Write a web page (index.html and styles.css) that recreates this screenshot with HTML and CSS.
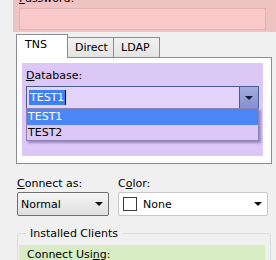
FILE: index.html
```html
<!DOCTYPE html>
<html>
<head>
<meta charset="utf-8">
<link rel="stylesheet" href="styles.css">
</head>
<body>
<div class="page">
  <div class="pw-section">
    <div class="lbl pw-lbl"><u>P</u>assword:</div>
    <div class="pw-input"></div>
  </div>

  <div class="tabs">
    <div class="tab active">TNS</div>
    <div class="tab">Direct</div>
    <div class="tab">LDAP</div>
  </div>
  <div class="panel">
    <div class="db-section">
      <div class="lbl db-lbl"><u>D</u>atabase:</div>
      <div class="combo">
        <div class="combo-text"><span class="sel">TEST1</span><span class="caret"></span></div>
        <div class="combo-btn"><span class="arrow"></span></div>
        <div class="dropdown">
          <div class="opt hi">TEST1</div>
          <div class="opt">TEST2</div>
        </div>
      </div>
    </div>
  </div>

  <div class="row">
    <div class="field f-conn">
      <div class="lbl"><u>C</u>onnect as:</div>
      <div class="select">
        <span>Normal</span><span class="arrow dark"></span>
      </div>
    </div>
    <div class="field f-color">
      <div class="lbl">C<u>o</u>lor:</div>
      <div class="select flat">
        <span class="swatch"></span><span class="grow">None</span><span class="arrow dark"></span>
      </div>
    </div>
  </div>

  <div class="group">
    <div class="group-title">Installed Clients</div>
    <div class="group-body">
      <div class="lbl green">Connect Usi<u>n</u>g:</div>
    </div>
  </div>
</div>
</body>
</html>
```

FILE: styles.css
```css
html, body {
  margin: 0;
  padding: 0;
}
body {
  background: #f0f0f0;
  font-family: "DejaVu Sans", Verdana, sans-serif;
  font-size: 11px;
  color: #000;
  width: 276px;
  height: 260px;
  overflow: hidden;
}
.page {
  display: flex;
  flex-direction: column;
}
.lbl {
  line-height: 13px;
  white-space: nowrap;
}
u {
  text-decoration: underline;
  text-underline-offset: 1px;
}
.pw-section {
  margin-left: 13px;
  margin-top: -8px;
  height: 40px;
  background: #f0c3c3;
  padding-left: 6px;
  padding-right: 10px;
  box-sizing: border-box;
}
.pw-lbl {
  height: 15px;
  padding-left: 0;
  line-height: 13px;
}
.pw-input {
  margin-top: 1px;
  height: 22px;
  background: #f9c9c9;
  border: 1px solid #dfb4b4;
  box-sizing: border-box;
}
.tabs {
  display: flex;
  margin-left: 16px;
  margin-top: 2px;
  height: 23px;
  align-items: flex-end;
  position: relative;
  z-index: 1;
}
.tab {
  height: 20px;
  box-sizing: border-box;
  border: 1px solid #898c95;
  border-bottom: none;
  background: linear-gradient(#f2f2f2, #e3e3e3);
  line-height: 19px;
  padding: 0 7px;
  margin-left: -1px;
}
.tab:first-child {
  margin-left: 0;
}
.tab.active {
  height: 24px;
  margin-bottom: -1px;
  background: #fff;
  width: 52px;
  padding: 0 0 0 8px;
  line-height: 20px;
  z-index: 2;
}
.tab:nth-child(2) { width: 47px; }
.tab:nth-child(3) { width: 47px; }
.panel {
  margin-left: 16px;
  width: 256px;
  height: 107px;
  box-sizing: border-box;
  border: 1px solid #898c95;
  background: #fff;
  padding: 5px 0 0 5px;
}
.db-section {
  width: 241px;
  height: 93px;
  background: #dcc8f7;
  padding: 6px 0 0 4px;
  box-sizing: border-box;
}
.db-lbl {
  height: 17px;
}
.combo {
  position: relative;
  width: 233px;
  height: 23px;
  box-sizing: border-box;
  border: 1px solid #4a5d8e;
  background: #e3d3f8;
  display: flex;
}
.combo-text {
  flex: 1;
  padding: 3px 0 0 2px;
  line-height: 14px;
  display: flex;
  align-items: flex-start;
}
.sel {
  background: #3d7ff5;
  color: #fff;
  line-height: 15px;
  padding: 0 1px;
}
.caret {
  display: inline-block;
  width: 1px;
  height: 15px;
  background: #000;
}
.combo-btn {
  width: 19px;
  height: 21px;
  box-sizing: border-box;
  border-left: 1px solid #4a5d8e;
  background: linear-gradient(#a4a9df, #8690d2);
  display: flex;
  align-items: center;
  justify-content: center;
}
.arrow {
  width: 0;
  height: 0;
  border-left: 4px solid transparent;
  border-right: 4px solid transparent;
  border-top: 4px solid #1a1a3a;
}
.dropdown {
  position: absolute;
  left: -1px;
  top: 21px;
  width: 233px;
  height: 33px;
  box-sizing: border-box;
  border: 1px solid #8a7fb0;
  background: #dcc8f7;
  box-shadow: 2px 2px 2px rgba(80, 60, 120, 0.45);
}
.opt {
  height: 16px;
  line-height: 16px;
  padding-left: 1px;
}
.opt.hi {
  background: #4b86f6;
  color: #fff;
}
.row {
  display: flex;
  margin-top: 13px;
  margin-left: 17px;
  gap: 9px;
}
.field .lbl {
  height: 15px;
}
.select {
  margin-top: 0;
  height: 24px;
  box-sizing: border-box;
  border: 1px solid #707070;
  border-radius: 2px;
  background: linear-gradient(#f6f6f6, #dedede);
  display: flex;
  align-items: center;
  padding: 0 5px 0 3px;
  justify-content: space-between;
}
.f-conn .select {
  width: 92px;
}
.f-color .select {
  width: 150px;
}
.select.flat {
  background: #fff;
  border: 1px solid #c8c8c8;
  justify-content: flex-start;
  padding-left: 4px;
}
.swatch {
  width: 14px;
  height: 14px;
  box-sizing: border-box;
  border: 1px solid #3a3a3a;
  background: #fff;
  margin-right: 6px;
}
.grow {
  flex: 1;
}
.arrow.dark {
  border-top-color: #111;
  border-left-width: 4px;
  border-right-width: 4px;
}
.group {
  position: relative;
  margin-top: 17px;
  margin-left: 17px;
  width: 254px;
  height: 40px;
  box-sizing: border-box;
  border: 1px solid #d5dfe5;
  border-radius: 3px;
  padding: 11px 5px 0 1px;
}
.group-title {
  position: absolute;
  top: -7px;
  left: 8px;
  background: #f0f0f0;
  padding: 0 4px;
  line-height: 13px;
}
.group-body {
  background: #d8ecc4;
  height: 30px;
  padding: 3px 0 0 8px;
  box-sizing: border-box;
}
```
